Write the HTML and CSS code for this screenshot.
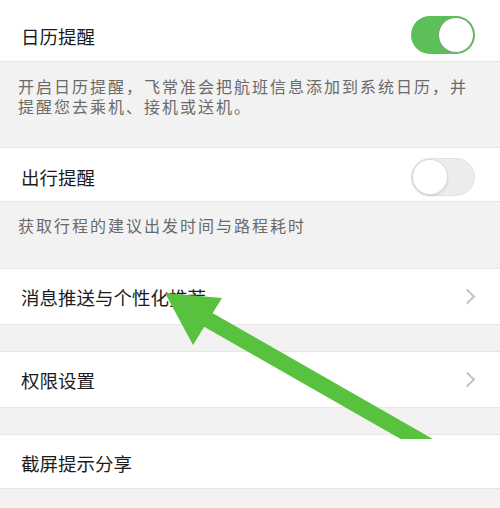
FILE: index.html
```html
<!DOCTYPE html>
<html lang="zh-CN">
<head>
<meta charset="utf-8">
<link rel="stylesheet" href="styles.css">
</head>
<body>
<div class="page">
  <div class="row row-first">
    <span class="title">日历提醒</span>
    <span class="switch on"><span class="knob"></span></span>
  </div>
  <div class="desc desc-first">开启日历提醒，飞常准会把航班信息添加到系统日历，并<br>提醒您去乘机、接机或送机。</div>
  <div class="row row-second">
    <span class="title">出行提醒</span>
    <span class="switch off"><span class="knob"></span></span>
  </div>
  <div class="desc desc-second">获取行程的建议出发时间与路程耗时</div>
  <div class="row row-link">
    <span class="title">消息推送与个性化推荐</span>
    <span class="chev"></span>
  </div>
  <div class="gap"></div>
  <div class="row row-link">
    <span class="title">权限设置</span>
    <span class="chev"></span>
  </div>
  <div class="gap"></div>
  <div class="row row-last">
    <span class="title">截屏提示分享</span>
  </div>
  <svg class="arrow" width="500" height="508" viewBox="0 0 500 508">
    <defs>
      <clipPath id="cut"><rect x="0" y="0" width="500" height="439"/></clipPath>
    </defs>
    <g clip-path="url(#cut)">
      <line x1="205" y1="318" x2="450" y2="458" stroke="#58c23e" stroke-width="16"/>
    </g>
    <polygon points="165,293 222,298 193,345" fill="#58c23e"/>
  </svg>
</div>
</body>
</html>
```

FILE: styles.css
```css
html, body {
  margin: 0;
  padding: 0;
  background: #f2f2f2;
}
.page {
  position: relative;
  width: 500px;
  height: 508px;
  overflow: hidden;
  font-family: "Noto Sans CJK SC", "Noto Sans", sans-serif;
}
.row {
  display: flex;
  align-items: center;
  justify-content: space-between;
  background: #fff;
  padding: 0 25px 0 21px;
  box-sizing: border-box;
  border-top: 1px solid #e6e6e6;
  border-bottom: 1px solid #e6e6e6;
}
.row-first {
  height: 62px;
  padding-top: 10px;
  border-top: none;
}
.row-second {
  height: 55px;
  padding-top: 5px;
}
.row-link {
  height: 57px;
}
.row-last {
  height: 55px;
  padding-top: 2px;
}
.title {
  font-size: 18.5px;
  color: #1c1c1c;
  line-height: 24px;
}
.desc {
  font-size: 16px;
  letter-spacing: 2px;
  color: #6a6a6a;
  line-height: 20px;
  padding: 0 0 0 18px;
  box-sizing: border-box;
}
.desc-first {
  height: 85px;
  padding-top: 14px;
}
.desc-second {
  height: 66px;
  padding-top: 13px;
}
.gap {
  height: 26px;
}
.switch {
  position: relative;
  width: 64px;
  height: 38px;
  border-radius: 19px;
  box-sizing: border-box;
}
.switch.on {
  background: #5cbf57;
  margin-top: -2px;
}
.switch.off {
  background: #ececec;
  border: 1px solid #e3e3e3;
}
.knob {
  position: absolute;
  top: 1px;
  width: 36px;
  height: 36px;
  border-radius: 50%;
  background: #fff;
  box-sizing: border-box;
}
.switch.on .knob {
  right: 1px;
  border: 1px solid #7a9a78;
}
.switch.off .knob {
  left: 0;
  top: 0;
  border: 1px solid #dcdcdc;
  box-shadow: 0 1px 2px rgba(0,0,0,0.12);
}
.chev {
  width: 9px;
  height: 9px;
  border-top: 2px solid #c4c4c4;
  border-right: 2px solid #c4c4c4;
  transform: rotate(45deg);
  margin-right: 2px;
}
.arrow {
  position: absolute;
  left: 0;
  top: 0;
}
```
